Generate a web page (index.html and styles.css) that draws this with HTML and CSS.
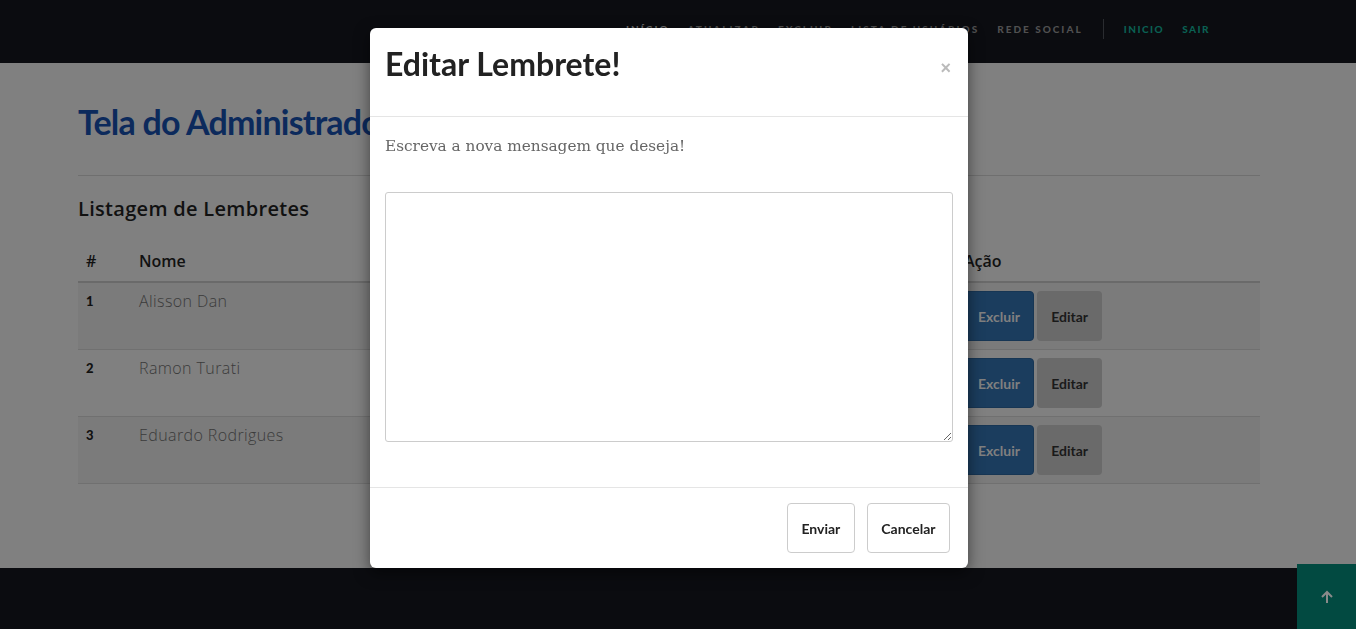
FILE: index.html
```html
<!DOCTYPE html>
<html lang="pt-BR">
<head>
<meta charset="utf-8">
<title>Tela do Administrador</title>
<link rel="stylesheet" href="styles.css">
</head>
<body>
<header class="topbar">
  <nav class="nav">
    <a class="nav-link active" href="#">Início</a>
    <a class="nav-link" href="#">Atualizar</a>
    <a class="nav-link" href="#">Excluir</a>
    <a class="nav-link" href="#">Lista de Usuários</a>
    <a class="nav-link" href="#">Rede Social</a>
    <span class="nav-sep"></span>
    <a class="nav-link teal" href="#">Inicio</a>
    <a class="nav-link teal" href="#">Sair</a>
  </nav>
</header>

<main class="main">
  <h1 class="page-title">Tela do Administrador</h1>
  <hr class="rule">
  <h3 class="section-title">Listagem de Lembretes</h3>
  <table class="table">
    <thead>
      <tr><th class="c-id">#</th><th class="c-name">Nome</th><th class="c-act">Ação</th></tr>
    </thead>
    <tbody>
      <tr class="odd"><td class="num">1</td><td class="name">Alisson Dan</td><td><button class="btn btn-blue">Excluir</button> <button class="btn btn-gray">Editar</button></td></tr>
      <tr><td class="num">2</td><td class="name">Ramon Turati</td><td><button class="btn btn-blue">Excluir</button> <button class="btn btn-gray">Editar</button></td></tr>
      <tr class="odd"><td class="num">3</td><td class="name">Eduardo Rodrigues</td><td><button class="btn btn-blue">Excluir</button> <button class="btn btn-gray">Editar</button></td></tr>
    </tbody>
  </table>
</main>

<footer class="footer"></footer>

<a class="to-top" href="#">
  <svg width="16" height="16" viewBox="0 0 16 16"><path d="M8 14V3M3 8l5-5 5 5" fill="none" stroke="#8a8a8a" stroke-width="2"/></svg>
</a>

<div class="modal">
  <div class="modal-header">
    <h4 class="modal-title">Editar Lembrete!</h4>
    <button class="close">×</button>
  </div>
  <div class="modal-body">
    <p class="modal-text">Escreva a nova mensagem que deseja!</p>
    <textarea class="textarea"></textarea>
  </div>
  <div class="modal-footer">
    <button class="btn btn-default">Enviar</button>
    <button class="btn btn-default">Cancelar</button>
  </div>
</div>
</body>
</html>
```

FILE: styles.css
```css
* { box-sizing: border-box; }
html, body { margin: 0; padding: 0; }
body {
  font-family: "Lato", "Open Sans", sans-serif;
  background: #808080;
  color: #111;
  overflow: hidden;
  height: 629px;
}

.topbar {
  height: 63px;
  background: #0b0c10;
  display: flex;
  align-items: center;
}
.nav {
  display: flex;
  align-items: center;
  margin-left: 626px;
  margin-top: -5px;
  gap: 18px;
}
.nav-link {
  font-family: "Lato", sans-serif;
  font-weight: 900;
  font-size: 10px;
  letter-spacing: 2px;
  text-transform: uppercase;
  color: #505050;
  text-decoration: none;
}
.nav-link.active { color: #6e6e6e; }
.nav-link.teal { color: #0a6053; letter-spacing: 1.5px; }
.nav-sep {
  width: 1px;
  height: 20px;
  background: #2a2c30;
  margin: 0 2px;
}

.main {
  padding: 40px 96px 84px 78px;
  height: 505px;
}
.page-title {
  margin: 0;
  font-size: 34px;
  line-height: 38px;
  font-weight: 700;
  color: #0c2a5c;
  letter-spacing: -0.8px;
}
.rule {
  margin: 34px 0 0;
  border: 0;
  border-top: 1px solid #6f6f6f;
}
.section-title {
  margin: 21px 0 0;
  font-family: "Open Sans", sans-serif;
  font-size: 20px;
  line-height: 24px;
  font-weight: 600;
  letter-spacing: 0.3px;
  color: #111;
}
.table {
  margin-top: 22px;
  width: 1182px;
  border-collapse: collapse;
}
.table th {
  text-align: left;
  font-family: "Open Sans", sans-serif;
  font-size: 16px;
  font-weight: 600;
  color: #111;
  line-height: 20px;
  padding: 8px 8px 10px;
  border-bottom: 2px solid #6a6a6a;
}
.c-id { width: 53px; }
.c-name { width: 825px; }
.table td {
  padding: 8px;
  vertical-align: top;
  line-height: 20px;
  border-bottom: 1px solid #707070;
  height: 67px;
}
.table tr.odd td { background: #7b7b7b; }
.num { font-weight: 900; font-size: 13px; color: #111; }
.name {
  font-family: "Open Sans", sans-serif;
  font-weight: 300;
  font-size: 16px;
  letter-spacing: 0.4px;
  color: #3a3a3a;
}

.btn {
  font-family: "Lato", sans-serif;
  font-size: 14px;
  font-weight: 700;
  height: 50px;
  border-radius: 4px;
  border: 1px solid transparent;
  cursor: pointer;
  vertical-align: top;
}
.btn-blue { background: #1b3d5e; color: #808080; border-color: #173654; width: 70px; }
.btn-gray { background: #6a6a6a; color: #1a1a1a; width: 65px; margin-left: -1px; }

.footer {
  position: fixed;
  left: 0; right: 0; top: 568px; bottom: 0;
  background: #0b0c10;
}
.to-top {
  position: fixed;
  left: 1297px; top: 564px;
  width: 59px; height: 65px;
  background: #024a41;
  display: flex;
  align-items: center;
  justify-content: center;
}

.modal {
  position: fixed;
  left: 370px; top: 28px;
  width: 598px; height: 540px;
  background: #fff;
  border-radius: 6px;
  box-shadow: 0 5px 15px rgba(0,0,0,.5);
  display: flex;
  flex-direction: column;
}
.modal-header {
  padding: 15px;
  border-bottom: 1px solid #e5e5e5;
  display: flex;
  align-items: flex-start;
  justify-content: space-between;
  height: 89px;
}
.modal-title {
  margin: 0;
  font-size: 32px;
  line-height: 42px;
  font-weight: 700;
  color: #222;
}
.close {
  background: none;
  border: 0;
  padding: 0;
  margin: 16px 2px 0 0;
  font-size: 18px;
  line-height: 18px;
  font-weight: 700;
  color: #bbb;
}
.modal-body {
  padding: 15px;
  height: 371px;
  border-bottom: 1px solid #e5e5e5;
}
.modal-text {
  margin: 0 0 32px;
  font-family: "DejaVu Serif", serif;
  font-size: 15.3px;
  line-height: 28px;
  color: #666;
}
.textarea {
  display: block;
  width: 568px;
  height: 250px;
  border: 1px solid #ccc;
  border-radius: 3px;
  resize: vertical;
}
.modal-footer {
  padding: 15px 18px 15px 15px;
  display: flex;
  justify-content: flex-end;
  gap: 12px;
}
.btn-default {
  background: #fff;
  border: 1px solid #ccc;
  color: #222;
  font-size: 14px;
  padding: 0 13.5px;
}
```
